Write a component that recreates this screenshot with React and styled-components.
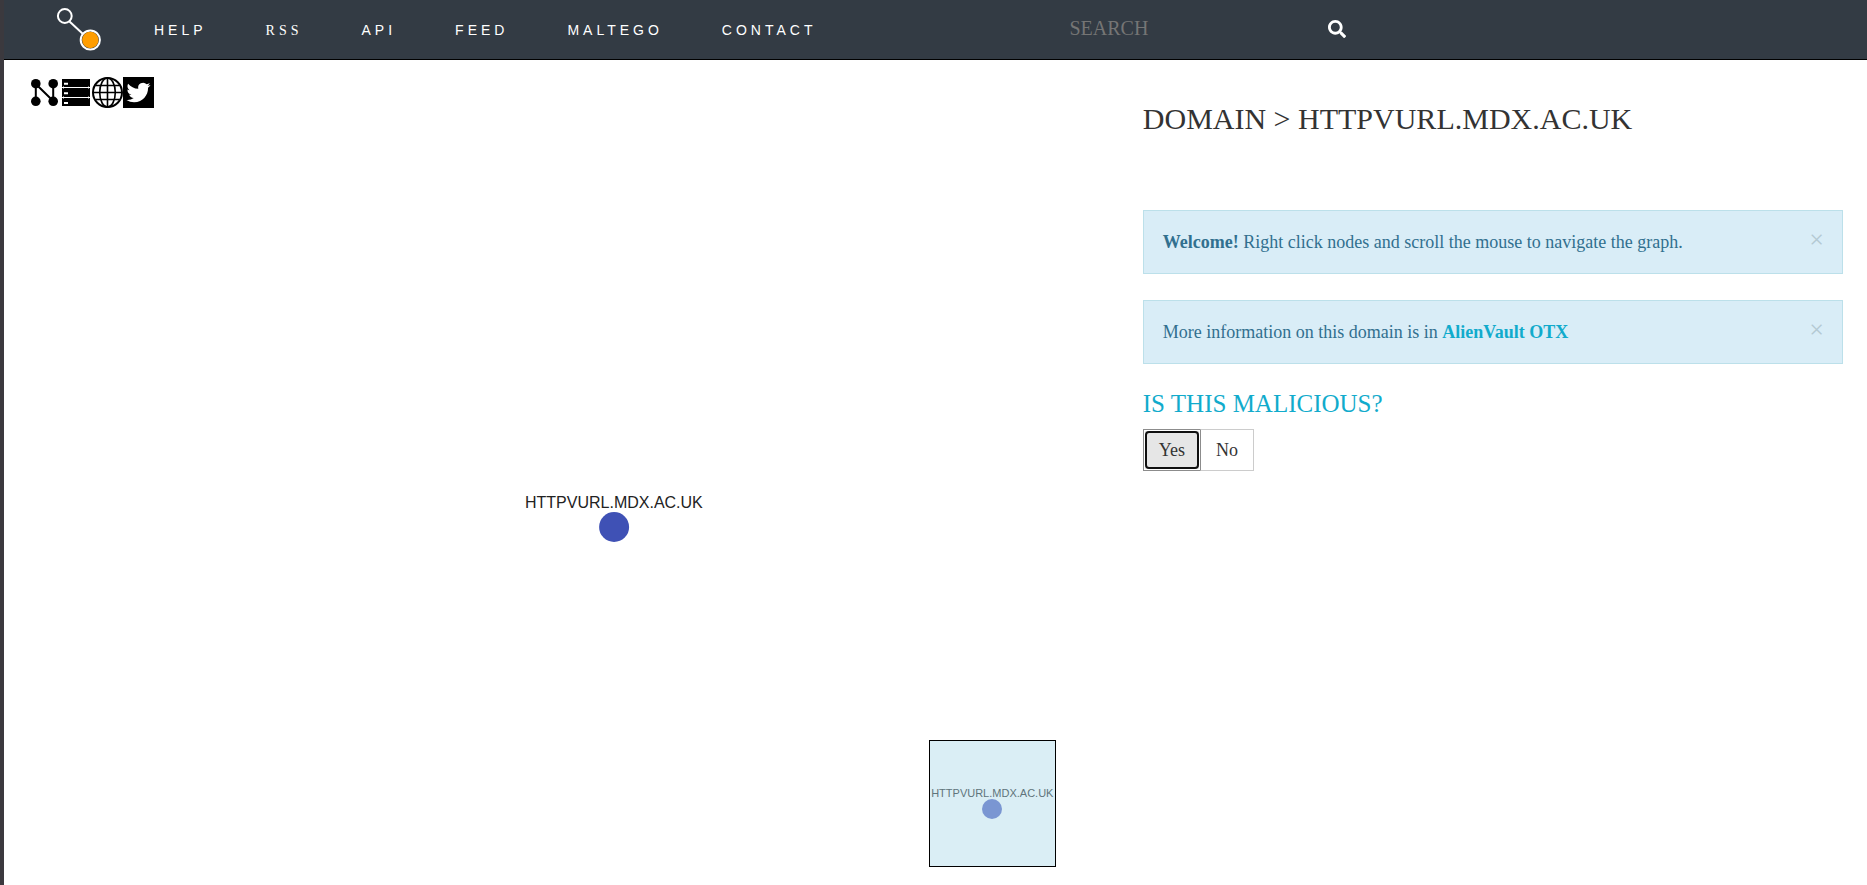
import React from 'react';
import styled, { createGlobalStyle } from 'styled-components';
import { FaSearch } from 'react-icons/fa';

const serif = '"Liberation Serif", "Times New Roman", serif';
const sans = '"Liberation Sans", Arial, sans-serif';

const GlobalStyle = createGlobalStyle`
  *, *::before, *::after { box-sizing: border-box; }
  body { margin: 0; background: #fff; font-family: ${serif}; color: #333; }
`;

const Page = styled.div`
  display: flex;
  flex-direction: column;
  min-height: 100vh;
  border-left: 4px solid #3b393e;
`;

const NavBar = styled.header`
  display: flex;
  align-items: center;
  height: 60px;
  padding-left: 51px;
  background: #333b44;
  border-bottom: 1px solid #000;
`;

const LogoLink = styled.a`
  display: flex;
  width: 99px;
  flex: none;
`;

const NavLinks = styled.nav`
  display: flex;
  align-items: baseline;
  flex: none;
  gap: 59px;
  padding-top: 2px;
`;

const NavLink = styled.a`
  font: 14px/20px ${(p) => (p.$serif ? serif : sans)};
  letter-spacing: 4px;
  color: #fff;
  text-decoration: none;
`;

const SearchForm = styled.form`
  display: flex;
  align-items: center;
  margin-left: 253px;
  padding-bottom: 2px;
`;

const SearchInput = styled.input`
  width: 259px;
  height: 40px;
  padding: 0;
  border: 0;
  background: transparent;
  color: #fff;
  font: 20px/24px ${serif};
  &::placeholder { color: #757575; opacity: 1; }
`;

const SearchButton = styled.button`
  display: flex;
  padding: 0;
  border: 0;
  background: none;
  color: #fff;
`;

const Main = styled.main`
  display: grid;
  grid-template-columns: 3fr 2fr;
  flex: 1;
`;

const GraphPane = styled.section`
  position: relative;
  min-height: 600px;
  padding: 17px 26px;
`;

const Tools = styled.div`
  display: flex;
`;

const ToolLink = styled.a`
  display: flex;
`;

const Node = styled.div`
  position: absolute;
  left: calc(50% + 51px);
  top: 434px;
  display: flex;
  flex-direction: column;
  align-items: center;
  transform: translateX(-50%);
  font: 16px/18px ${sans};
  color: #222;
`;

const Dot = styled.span`
  width: ${(p) => p.$size}px;
  height: ${(p) => p.$size}px;
  border-radius: 50%;
  background: ${(p) => p.$color};
`;

const MiniMap = styled.div`
  position: absolute;
  right: 66px;
  bottom: 18px;
  display: flex;
  flex-direction: column;
  align-items: center;
  width: 127px;
  height: 127px;
  padding-top: 46px;
  overflow: hidden;
  border: 1px solid #000;
  background: #daeef5;
  color: #60747b;
  font: 11px/12px ${sans};
`;

const Details = styled.section`
  padding: 39px 24px 40px 21px;
`;

const Title = styled.h1`
  margin: 0 0 71px;
  font-size: 30px;
  line-height: 40px;
  font-weight: 400;
`;

const Alert = styled.div`
  display: flex;
  align-items: center;
  justify-content: space-between;
  height: 64px;
  margin-bottom: 26px;
  padding: 0 18px 0 19px;
  border: 1px solid #bce0ea;
  background: #d9edf7;
  color: #31708f;
  font-size: 18px;
  line-height: 26px;
`;

const AlertText = styled.p`
  margin: 0;
`;

const AlertLink = styled.a`
  color: #11abcc;
  font-weight: 700;
  text-decoration: none;
`;

const CloseButton = styled.button`
  padding: 0 0 4px;
  border: 0;
  background: none;
  color: #b4c9d3;
  font: 26px/24px ${serif};
`;

const Question = styled.h2`
  margin: 0 0 11px;
  color: #11abcc;
  font-size: 25px;
  line-height: 28px;
  font-weight: 400;
`;

const ButtonGroup = styled.div`
  display: flex;
`;

const Choice = styled.button`
  position: relative;
  height: 42px;
  padding: 0 15px;
  border: 1px solid ${(p) => (p.$active ? '#8c8c8c' : '#ccc')};
  border-radius: 0;
  background: ${(p) => (p.$active ? '#e6e6e6' : '#fff')};
  box-shadow: ${(p) => (p.$active ? 'inset 0 0 0 1px #fff' : 'none')};
  color: #333;
  font: 18px/26px ${serif};

  & + & {
    margin-left: -1px;
    border-left-color: #8c8c8c;
  }

  &::after {
    content: '';
    display: ${(p) => (p.$active ? 'block' : 'none')};
    position: absolute;
    inset: 1px;
    border: 2px solid #101010;
    border-radius: 4px;
  }
`;

const Logo = () => (
  <svg width="46" height="44" viewBox="0 0 46 44" aria-hidden="true">
    <path d="M14.500 13.500 28 26" stroke="#fff" strokeWidth="2" />
    <circle cx="9.800" cy="8" r="6.900" fill="none" stroke="#fff" strokeWidth="2" />
    <circle cx="35.300" cy="32" r="9.600" fill="#333b44" stroke="#fff" strokeWidth="2" />
    <circle cx="35.300" cy="32" r="8.200" fill="#ff9d00" />
  </svg>
);

const NodesIcon = () => (
  <svg width="31" height="31" viewBox="0 0 31 31" aria-hidden="true">
    <path d="M5.800 7v17M23.200 7v17M5.800 7l17.400 17" stroke="#000" strokeWidth="2" fill="none" />
    <circle cx="5.800" cy="6.700" r="4.800" />
    <circle cx="23.200" cy="6.700" r="4.800" />
    <circle cx="5.800" cy="24.300" r="4.800" />
    <circle cx="23.200" cy="24.300" r="4.800" />
  </svg>
);

const ServerIcon = () => (
  <svg width="31" height="31" viewBox="0 0 31 31" aria-hidden="true">
    <path d="M1 2h28v27H1z" />
    <path d="M1 10.500h28M1 20.500h28" stroke="#fff" strokeWidth="1" />
    <path d="M3 6.700h4M3 16.200h4M3 26h4" stroke="#fff" strokeWidth="2" />
    <path d="M2.500 9.500v2M27.500 9.500v2M2.500 19.500v2M27.500 19.500v2" stroke="#fff" strokeWidth="1" />
  </svg>
);

const GlobeIcon = () => (
  <svg width="31" height="31" viewBox="0 0 31 31" fill="none" stroke="#000" strokeWidth="1.600" aria-hidden="true">
    <circle cx="15.500" cy="15.500" r="14.500" strokeWidth="2" />
    <ellipse cx="15.500" cy="15.500" rx="7.800" ry="14.500" />
    <path d="M15.500 1v29M1 15.500h29M3.500 8.500h24M3.500 22.500h24" />
  </svg>
);

const BirdIcon = () => (
  <svg width="31" height="31" viewBox="0 0 31 31" aria-hidden="true">
    <path d="M0 0h31v31H0z" />
    <path
      fill="#fff"
      transform="translate(3.500 3.500)"
      d="M23.953 4.570a10 10 0 01-2.825.775 4.958 4.958 0 002.163-2.723c-.951.555-2.005.959-3.127 1.184a4.920 4.920 0 00-8.384 4.482C7.690 8.095 4.067 6.130 1.640 3.162a4.822 4.822 0 00-.666 2.475c0 1.710.870 3.213 2.188 4.096a4.904 4.904 0 01-2.228-.616v.060a4.923 4.923 0 003.946 4.827 4.996 4.996 0 01-2.212.085 4.936 4.936 0 004.604 3.417 9.867 9.867 0 01-6.102 2.105c-.390 0-.779-.023-1.170-.067a13.995 13.995 0 007.557 2.209c9.053 0 13.998-7.496 13.998-13.985 0-.210 0-.420-.015-.630A9.935 9.935 0 0024 4.590z"
    />
  </svg>
);

const links = ['HELP', 'RSS', 'API', 'FEED', 'MALTEGO', 'CONTACT'];

const tools = [
  { name: 'Graph view', Icon: NodesIcon },
  { name: 'Table view', Icon: ServerIcon },
  { name: 'Website', Icon: GlobeIcon },
  { name: 'Twitter', Icon: BirdIcon },
];

function Notice({ children }) {
  return (
    <Alert>
      <AlertText>{children}</AlertText>
      <CloseButton type="button" aria-label="Close">×</CloseButton>
    </Alert>
  );
}

export default function App() {
  return (
    <Page>
      <GlobalStyle />
      <NavBar>
        <LogoLink href="#" aria-label="Home"><Logo /></LogoLink>
        <NavLinks>
          {links.map((label) => (
            <NavLink key={label} href="#" $serif={label === 'RSS'}>{label}</NavLink>
          ))}
        </NavLinks>
        <SearchForm>
          <SearchInput type="text" placeholder="SEARCH" aria-label="Search" />
          <SearchButton type="button" aria-label="Search"><FaSearch size={18} /></SearchButton>
        </SearchForm>
      </NavBar>
      <Main>
        <GraphPane>
          <Tools>
            {tools.map(({ name, Icon }) => (
              <ToolLink key={name} href="#" aria-label={name}><Icon /></ToolLink>
            ))}
          </Tools>
          <Node>
            HTTPVURL.MDX.AC.UK
            <Dot $size={30} $color="#3f51b5" />
          </Node>
          <MiniMap>
            HTTPVURL.MDX.AC.UK
            <Dot $size={20} $color="#7a96d2" />
          </MiniMap>
        </GraphPane>
        <Details>
          <Title>DOMAIN &gt; HTTPVURL.MDX.AC.UK</Title>
          <Notice>
            <strong>Welcome!</strong> Right click nodes and scroll the mouse to navigate the graph.
          </Notice>
          <Notice>
            More information on this domain is in <AlertLink href="#">AlienVault OTX</AlertLink>
          </Notice>
          <Question>IS THIS MALICIOUS?</Question>
          <ButtonGroup>
            <Choice type="button" $active>Yes</Choice>
            <Choice type="button">No</Choice>
          </ButtonGroup>
        </Details>
      </Main>
    </Page>
  );
}
